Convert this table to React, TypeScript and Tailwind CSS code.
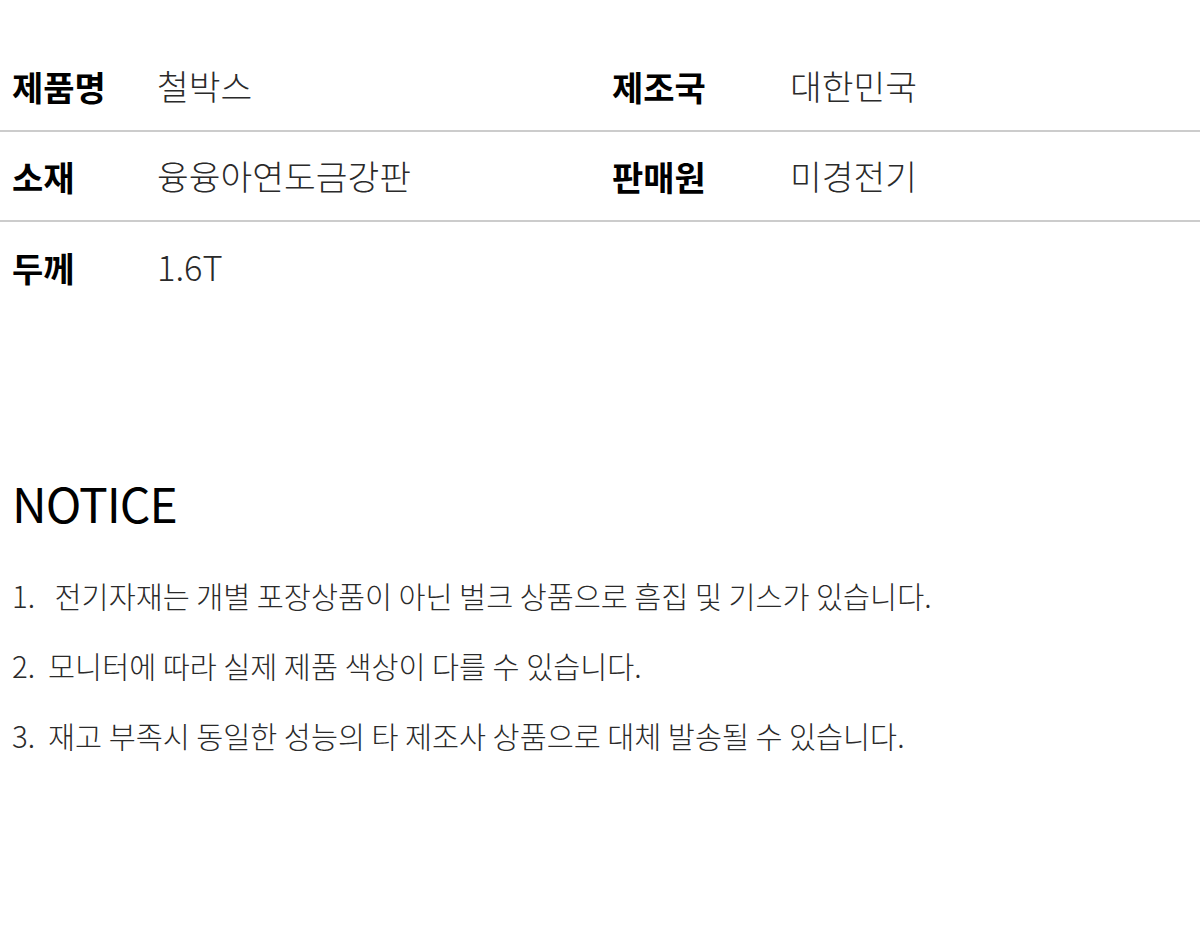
export default function App() {
  const rows: [string, string, string?, string?][] = [
    ["제품명", "철박스", "제조국", "대한민국"],
    ["소재", "융융아연도금강판", "판매원", "미경전기"],
    ["두께", "1.6T"],
  ];
  const notices = [
    "1.\u00a0\u00a0 전기자재는 개별 포장상품이 아닌 벌크 상품으로 흠집 및 기스가 있습니다.",
    "2.\u00a0 모니터에 따라 실제 제품 색상이 다를 수 있습니다.",
    "3.\u00a0 재고 부족시 동일한 성능의 타 제조사 상품으로 대체 발송될 수 있습니다.",
  ];

  return (
    <div
      className="w-[1200px] h-[951px] bg-white text-black"
      style={{ fontFamily: '"Noto Sans CJK KR", "Noto Sans", sans-serif' }}
    >
      <div className="pt-[42px]">
        {rows.map((r, i) => (
          <div
            key={i}
            className={
              "flex h-[90px] items-center " +
              (i < rows.length - 1 ? "border-b-2 border-[#cccccc]" : "")
            }
          >
            <div className="flex w-[600px] items-center">
              <span className="w-[157px] pl-3 text-[34px] font-bold">{r[0]}</span>
              <span className="text-[34.5px] font-light text-[#2a2a2a]">{r[1]}</span>
            </div>
            {r[2] && (
              <div className="flex items-center">
                <span className="w-[190px] pl-3 text-[34px] font-bold">{r[2]}</span>
                <span className="text-[34.5px] font-light text-[#2a2a2a]">{r[3]}</span>
              </div>
            )}
          </div>
        ))}
      </div>

      <div className="mt-[166px] pl-3">
        <h2 className="text-[48px] font-normal leading-none tracking-[-1px]">NOTICE</h2>
        <ul className="mt-[48px] flex flex-col gap-[28px]">
          {notices.map((n, i) => (
            <li key={i} className="text-[29.4px] font-light leading-[42px] text-[#2a2a2a]">
              {n}
            </li>
          ))}
        </ul>
      </div>
    </div>
  );
}
